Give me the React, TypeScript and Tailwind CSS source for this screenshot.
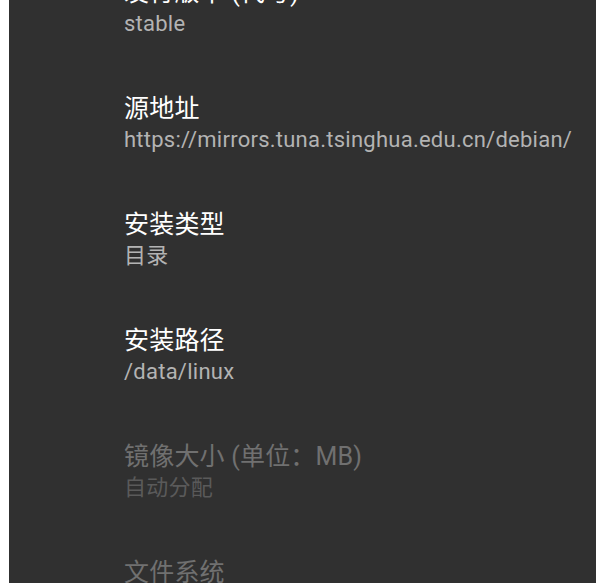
import React from "react";

type Item = { title: string; summary: string; disabled?: boolean };

const items: Item[] = [
  { title: "发行版本 (代号)", summary: "stable" },
  { title: "源地址", summary: "https://mirrors.tuna.tsinghua.edu.cn/debian/" },
  { title: "安装类型", summary: "目录" },
  { title: "安装路径", summary: "/data/linux" },
  { title: "镜像大小 (单位：MB)", summary: "自动分配", disabled: true },
  { title: "文件系统", summary: "ext4", disabled: true },
];

export default function App() {
  return (
    <div
      className="w-[596px] h-[583px] overflow-hidden bg-white flex"
      style={{ fontFamily: 'Roboto, "Noto Sans CJK SC", sans-serif' }}
    >
      <div className="ml-[9px] flex-1 bg-[#303030] overflow-hidden">
        <div className="mt-[-50px] flex flex-col">
          {items.map((it) => (
            <div key={it.title} className="pl-[115px] pr-4 pt-[27px] pb-[27px] flex flex-col">
              <div
                className={
                  "text-[25px] leading-[32px] whitespace-nowrap tracking-[0.2px] " +
                  (it.disabled ? "text-[#707070]" : "text-white")
                }
              >
                {it.title}
              </div>
              <div
                className={
                  "text-[22px] leading-[30px] whitespace-nowrap tracking-[0.25px] " +
                  (it.disabled ? "text-[#5a5a5a]" : "text-[#b3b3b3]")
                }
              >
                {it.summary}
              </div>
            </div>
          ))}
        </div>
      </div>
    </div>
  );
}
